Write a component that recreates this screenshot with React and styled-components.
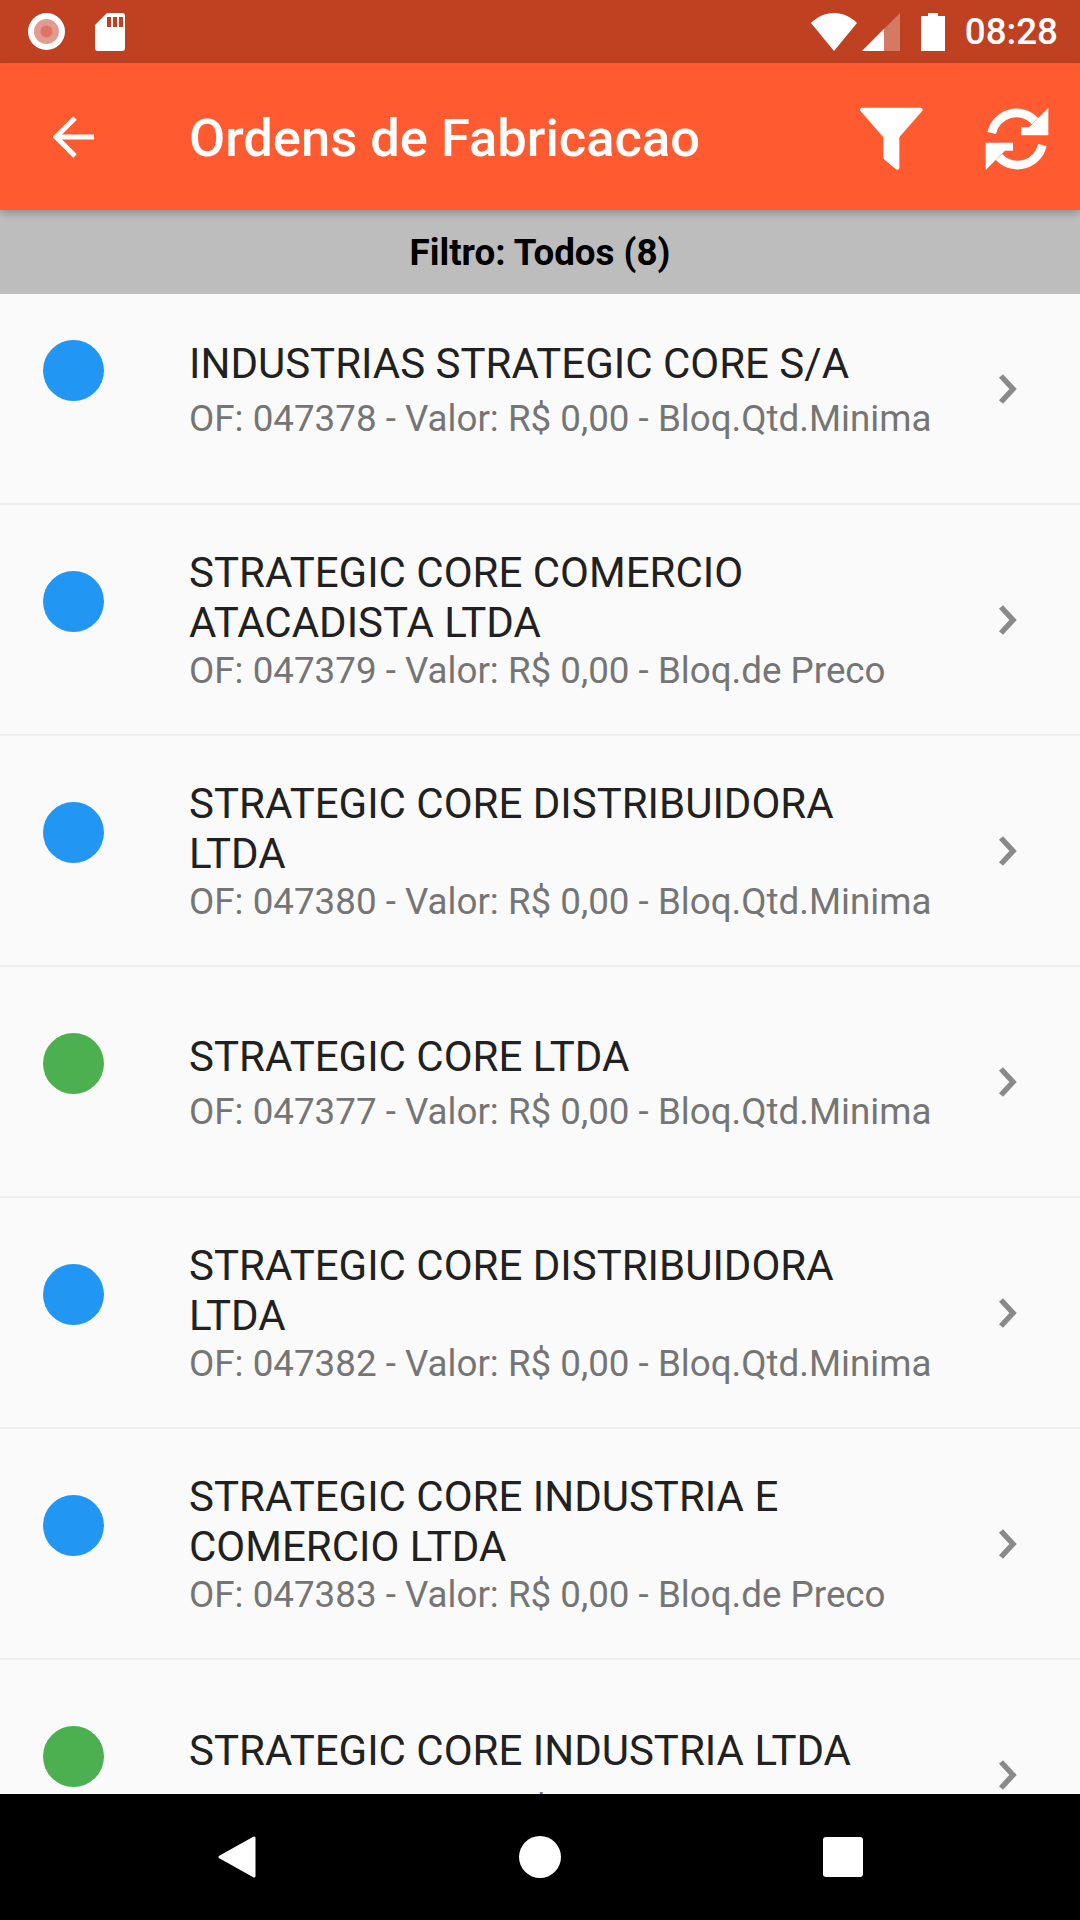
import React from "react";
import styled, { createGlobalStyle } from "styled-components";

const Global = createGlobalStyle`
  html, body {
    margin: 0;
    padding: 0;
    background: #fafafa;
  }
  * {
    box-sizing: border-box;
  }
`;

const Screen = styled.div`
  width: 1080px;
  height: 1920px;
  display: flex;
  flex-direction: column;
  overflow: hidden;
  font-family: Roboto, "Liberation Sans", sans-serif;
  background: #fafafa;
`;

const StatusBar = styled.div`
  height: 63px;
  flex: 0 0 auto;
  display: flex;
  align-items: center;
  padding: 0 22px 0 28px;
  background: #bf4122;
  color: #fff;
`;
const StatusLeft = styled.div`
  display: flex;
  align-items: center;
  gap: 30px;
  flex: 1;
`;
const StatusRight = styled.div`
  display: flex;
  align-items: center;
`;
const Clock = styled.div`
  margin-left: 20px;
  font-size: 36.75px;
  font-weight: 500;
  line-height: 40px;
`;

const AppBar = styled.div`
  height: 147px;
  flex: 0 0 auto;
  display: flex;
  align-items: center;
  background: #ff5a30;
  color: #fff;
  position: relative;
  z-index: 1;
  box-shadow: 0 3px 8px rgba(0, 0, 0, 0.25);
`;
const BackButton = styled.div`
  width: 189px;
  padding-left: 53px;
  display: flex;
  align-items: center;
`;
const Title = styled.div`
  flex: 1;
  padding-top: 2px;
  font-size: 52.5px;
  font-weight: 500;
`;
const Actions = styled.div`
  display: flex;
  align-items: center;
  gap: 41px;
  padding: 5px 21px 0 0;
`;

const FilterBar = styled.div`
  height: 84px;
  flex: 0 0 auto;
  display: flex;
  align-items: center;
  justify-content: center;
  background: #bdbdbd;
  color: #000;
  font-size: 36.75px;
  font-weight: 700;
`;

const List = styled.div`
  flex: 1;
  min-height: 0;
  overflow: hidden;
`;
const Row = styled.div`
  height: ${({ $first }) => ($first ? 211 : 231)}px;
  flex: 0 0 auto;
  display: flex;
  align-items: center;
  padding-bottom: ${({ $first }) => ($first ? 20 : 0)}px;
  border-bottom: solid 2px #eeeeee;
`;
const Dot = styled.div`
  width: 61px;
  height: 61px;
  flex: 0 0 auto;
  align-self: flex-start;
  margin: ${({ $first }) => ($first ? 46 : 66)}px 85px 0 43px;
  border-radius: 50%;
  background: ${({ $color }) => $color};
`;
const RowText = styled.div`
  flex: 1;
  min-width: 0;
  margin-top: ${({ $shift }) => $shift || 0}px;
`;
const RowTitle = styled.div`
  min-height: ${({ $tall }) => ($tall ? 64 : 59)}px;
  padding-top: 2px;
  font-size: 42px;
  line-height: 50px;
  color: #212121;
`;
const RowSub = styled.div`
  font-size: 36.75px;
  line-height: 45px;
  color: #757575;
  white-space: nowrap;
`;
const Chevron = styled.div`
  width: 146px;
  flex: 0 0 auto;
  display: flex;
  padding-left: 64px;
`;

const NavBar = styled.div`
  height: 126px;
  flex: 0 0 auto;
  display: flex;
  align-items: center;
  justify-content: center;
  gap: 262px;
  background: #000;
`;

const RecordIcon = () => (
  <svg width="37" height="37" viewBox="0 0 37 37">
    <circle cx="18.5" cy="18.5" r="18.5" fill="#fff" />
    <circle cx="18.5" cy="18.5" r="12.5" fill="#e49b8f" />
    <circle cx="18.5" cy="18.5" r="6" fill="#dd7468" />
  </svg>
);

const SdIcon = () => (
  <svg width="30" height="38" viewBox="0 0 30 38">
    <path
      d="M12 0H27a3 3 0 0 1 3 3V35a3 3 0 0 1-3 3H3a3 3 0 0 1-3-3V12Z"
      fill="#fff"
    />
    <path d="M12 4h4v10h-4zM18 4h4v10h-4zM24 4h4v10h-4z" fill="#bf4122" />
  </svg>
);

const WifiIcon = () => (
  <svg width="46" height="38" viewBox="0 0 46 38">
    <path d="M23 38L0 10C6 4 14 0 23 0s17 4 23 10Z" fill="#fff" />
  </svg>
);

const SignalIcon = () => (
  <svg width="38" height="38" viewBox="0 0 38 38" style={{ marginLeft: 5 }}>
    <path d="M38 0V38H0Z" fill="#fff" opacity="0.3" />
    <path d="M22 16V38H0Z" fill="#fff" />
  </svg>
);

const BatteryIcon = () => (
  <svg width="24" height="38" viewBox="0 0 24 38" style={{ marginLeft: 21 }}>
    <path d="M7 0h10v3h7v35H0V3h7Z" fill="#fff" />
  </svg>
);

const BackIcon = () => (
  <svg width="41" height="42" viewBox="0 0 41 42">
    <path
      d="M41 21H4M22 2L3 21l19 19"
      fill="none"
      stroke="#fff"
      strokeWidth="5"
    />
  </svg>
);

const FilterIcon = () => (
  <svg width="84" height="84" viewBox="0 0 252 252">
    <path
      d="M36 38H212L142 118V212L106 182V118Z"
      fill="#fff"
      stroke="#fff"
      strokeWidth="12"
      strokeLinejoin="round"
    />
  </svg>
);

const RefreshIcon = () => (
  <svg width="84" height="84" viewBox="0 0 252 252" fill="#fff">
    <path
      d="M50 108A76 76 0 0 1 180 72"
      fill="none"
      stroke="#fff"
      strokeWidth="26"
    />
    <path d="M220 33V115H138V91H162Z" />
    <path
      d="M202 144A76 76 0 0 1 72 180"
      fill="none"
      stroke="#fff"
      strokeWidth="26"
    />
    <path d="M32 219V137H114V161H90Z" />
  </svg>
);

const ChevronIcon = () => (
  <svg width="20" height="32" viewBox="0 0 20 32">
    <path
      d="M3 3L15 16L3 29"
      fill="none"
      stroke="#8a8a8a"
      strokeWidth="5.5"
    />
  </svg>
);

const NavBack = () => (
  <svg width="40" height="42" viewBox="0 0 40 42">
    <path
      d="M37 2V40L3 21Z"
      fill="#fff"
      stroke="#fff"
      strokeWidth="3"
      strokeLinejoin="round"
    />
  </svg>
);

const NavHome = () => (
  <svg width="42" height="42" viewBox="0 0 42 42">
    <circle cx="21" cy="21" r="21" fill="#fff" />
  </svg>
);

const NavRecent = () => (
  <svg width="40" height="42" viewBox="0 0 40 42">
    <rect x="0" y="1" width="40" height="40" rx="3" fill="#fff" />
  </svg>
);

const BLUE = "#2196f3";
const GREEN = "#4caf50";

const orders = [
  { color: BLUE, name: "INDUSTRIAS STRATEGIC CORE S/A", of: "047378", block: "Bloq.Qtd.Minima", first: true },
  { color: BLUE, name: "STRATEGIC CORE COMERCIO ATACADISTA LTDA", of: "047379", block: "Bloq.de Preco" },
  { color: BLUE, name: "STRATEGIC CORE DISTRIBUIDORA LTDA", of: "047380", block: "Bloq.Qtd.Minima" },
  { color: GREEN, name: "STRATEGIC CORE LTDA", of: "047377", block: "Bloq.Qtd.Minima" },
  { color: BLUE, name: "STRATEGIC CORE DISTRIBUIDORA LTDA", of: "047382", block: "Bloq.Qtd.Minima" },
  { color: BLUE, name: "STRATEGIC CORE INDUSTRIA E COMERCIO LTDA", of: "047383", block: "Bloq.de Preco" },
  { color: GREEN, name: "STRATEGIC CORE INDUSTRIA LTDA", of: "047384", block: "Bloq.de Preco", shift: 7, tall: true }
];

export default function App() {
  return (
    <Screen>
      <Global />
      <StatusBar>
        <StatusLeft>
          <RecordIcon />
          <SdIcon />
        </StatusLeft>
        <StatusRight>
          <WifiIcon />
          <SignalIcon />
          <BatteryIcon />
          <Clock>08:28</Clock>
        </StatusRight>
      </StatusBar>
      <AppBar>
        <BackButton>
          <BackIcon />
        </BackButton>
        <Title>Ordens de Fabricacao</Title>
        <Actions>
          <FilterIcon />
          <RefreshIcon />
        </Actions>
      </AppBar>
      <FilterBar>Filtro: Todos (8)</FilterBar>
      <List>
        {orders.map(order => (
          <Row key={order.of} $first={order.first}>
            <Dot $color={order.color} $first={order.first} />
            <RowText $shift={order.shift}>
              <RowTitle $tall={order.tall}>{order.name}</RowTitle>
              <RowSub>
                OF: {order.of} - Valor: R$ 0,00 - {order.block}
              </RowSub>
            </RowText>
            <Chevron>
              <ChevronIcon />
            </Chevron>
          </Row>
        ))}
      </List>
      <NavBar>
        <NavBack />
        <NavHome />
        <NavRecent />
      </NavBar>
    </Screen>
  );
}
